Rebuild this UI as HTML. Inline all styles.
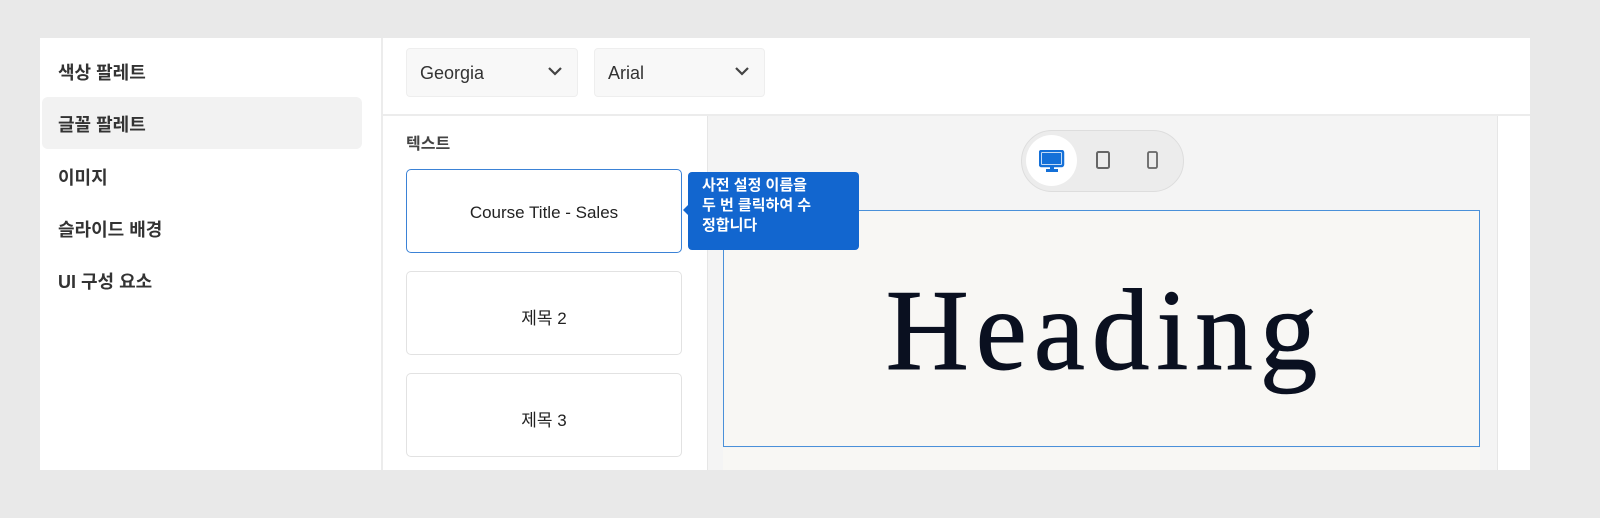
<!DOCTYPE html>
<html><head><meta charset="utf-8"><style>
*{margin:0;padding:0;box-sizing:border-box}
body{width:1600px;height:518px;background:#e9e9e9;font-family:"Liberation Sans","Noto Sans CJK KR",sans-serif;position:relative;overflow:hidden}
.abs{position:absolute}
.nav{font-size:18px;font-weight:bold;color:#333;left:58px}
.sel{background:#f8f8f8;border:1px solid #eee;border-radius:4px;height:49px;top:48px;font-size:18px;color:#333;padding:14px 0 0 13px}
.chev{position:absolute;right:14px;top:17px}
.card{left:406px;width:276px;background:#fff;border:1px solid #e2e2e2;border-radius:5px;text-align:center;font-size:17px;color:#222}
</style></head><body>
<div class="abs" style="left:40px;top:38px;width:1490px;height:432px;background:#fff"></div>
<div class="abs" style="left:381px;top:38px;width:2px;height:432px;background:#ececec"></div>
<div class="abs" style="left:42px;top:97px;width:320px;height:52px;background:#f2f2f2;border-radius:6px"></div>
<div class="abs nav" style="top:59px">색상 팔레트</div>
<div class="abs nav" style="top:111px">글꼴 팔레트</div>
<div class="abs nav" style="top:164px">이미지</div>
<div class="abs nav" style="top:216px">슬라이드 배경</div>
<div class="abs nav" style="top:268px">UI 구성 요소</div>
<div class="abs sel" style="left:406px;width:172px">Georgia<svg class="chev" width="16" height="10" viewBox="0 0 16 10"><path d="M2 2l6 6 6-6" stroke="#444" stroke-width="2.2" fill="none"/></svg></div>
<div class="abs sel" style="left:594px;width:171px">Arial<svg class="chev" width="16" height="10" viewBox="0 0 16 10"><path d="M2 2l6 6 6-6" stroke="#444" stroke-width="2.2" fill="none"/></svg></div>
<div class="abs" style="left:383px;top:114px;width:1147px;height:2px;background:#ececec"></div>
<div class="abs" style="left:707px;top:116px;width:790px;height:354px;background:#f4f4f4;border-left:1px solid #e6e6e6"></div>
<div class="abs" style="left:1497px;top:116px;width:33px;height:354px;background:#fff;border-left:1px solid #e6e6e6"></div>
<div class="abs" style="left:406px;top:130px;font-size:16px;font-weight:bold;color:#444">텍스트</div>
<div class="card abs" style="top:169px;height:84px;border:1.5px solid #3b82d6;padding-top:33px">Course Title - Sales</div>
<div class="card abs" style="top:271px;height:84px;padding-top:32px">제목 2</div>
<div class="card abs" style="top:373px;height:84px;padding-top:32px">제목 3</div>
<div class="abs" style="left:1021px;top:130px;width:163px;height:62px;background:#ececec;border:1px solid #ddd;border-radius:31px"></div>
<div class="abs" style="left:1026px;top:135px;width:51px;height:51px;background:#fff;border-radius:50%"></div>
<svg class="abs" style="left:1039px;top:150px" width="26" height="24" viewBox="0 0 26 24"><rect x="1" y="1" width="23" height="15" rx="1.5" fill="none" stroke="#1470d8" stroke-width="2.5"/><rect x="3" y="3" width="19" height="11" fill="#1470d8"/><rect x="11" y="16" width="4" height="4" fill="#1470d8"/><rect x="7" y="19" width="12" height="3" fill="#1470d8"/></svg>
<svg class="abs" style="left:1096px;top:151px" width="14" height="18" viewBox="0 0 14 18"><rect x="1" y="1" width="12" height="16" rx="1.5" fill="none" stroke="#666" stroke-width="2"/></svg>
<svg class="abs" style="left:1147px;top:151px" width="11" height="18" viewBox="0 0 11 18"><rect x="1" y="1" width="9" height="16" rx="1.5" fill="none" stroke="#666" stroke-width="1.8"/></svg>
<div class="abs" style="left:723px;top:210px;width:757px;height:237px;background:#f8f7f4;border:1.5px solid #4a90d9"></div>
<div class="abs" style="left:723px;top:448px;width:757px;height:22px;background:#f8f7f4"></div>
<div class="abs" style="left:723px;top:273px;width:757px;text-align:center;font-family:'Liberation Serif',serif;font-size:115px;letter-spacing:7px;text-indent:7px;color:#0a1020;line-height:1;-webkit-text-stroke:1px #0a1020">Heading</div>
<div class="abs" style="z-index:5;left:688px;top:172px;width:171px;height:78px;background:#1266cf;border-radius:4px;color:#fff;font-size:15px;font-weight:bold;line-height:20px;padding:4px 0 0 14px">사전 설정 이름을<br>두 번 클릭하여 수<br>정합니다</div>
<div class="abs" style="z-index:5;left:683px;top:204px;width:0;height:0;border-top:6px solid transparent;border-bottom:6px solid transparent;border-right:6px solid #1266cf"></div>
</body></html>
